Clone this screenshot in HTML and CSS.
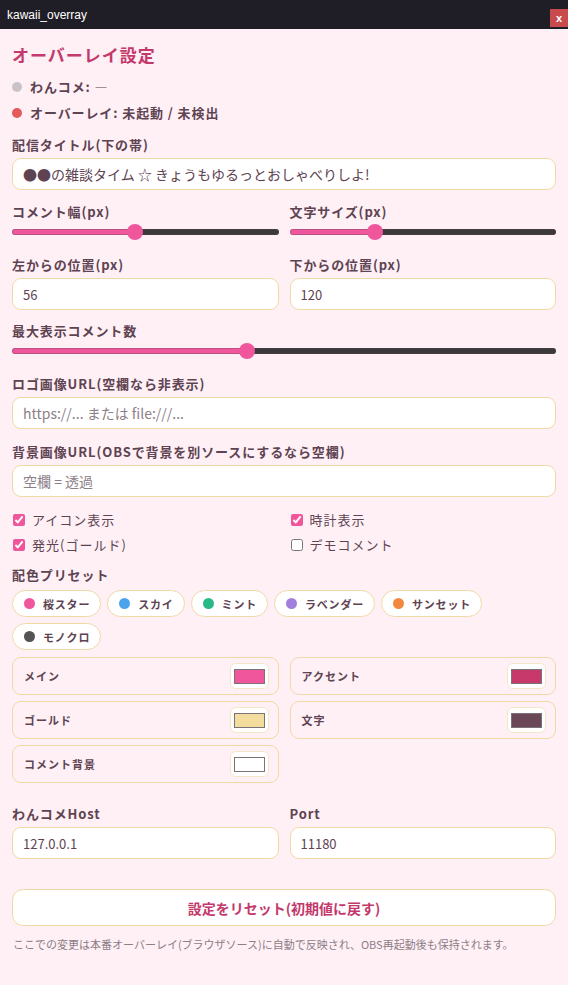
FILE: index.html
```html
<!DOCTYPE html>
<html lang="ja">
<head>
<meta charset="utf-8">
<title>kawaii_overray</title>
<link rel="stylesheet" href="styles.css">
</head>
<body>
<div class="titlebar">
  <span class="app-name">kawaii_overray</span>
  <span class="close">x</span>
</div>
<main class="panel">
  <h1 class="heading">オーバーレイ設定</h1>
  <div class="statuses">
    <div class="status"><span class="dot dot-gray"></span>わんコメ: —</div>
    <div class="status"><span class="dot dot-red"></span>オーバーレイ: 未起動 / 未検出</div>
  </div>

  <div class="field mt13">
    <label class="label">配信タイトル(下の帯)</label>
    <input class="text-input" type="text" value="●●の雑談タイム ☆ きょうもゆるっとおしゃべりしよ!">
  </div>

  <div class="grid2 mt13">
    <div class="field">
      <label class="label slim">コメント幅(px)</label>
      <input class="range" type="range" min="0" max="100" value="46" style="--p:46%">
    </div>
    <div class="field">
      <label class="label slim">文字サイズ(px)</label>
      <input class="range" type="range" min="0" max="100" value="31" style="--p:31%">
    </div>
  </div>

  <div class="grid2 mt16">
    <div class="field">
      <label class="label">左からの位置(px)</label>
      <input class="text-input num" type="text" value="56">
    </div>
    <div class="field">
      <label class="label">下からの位置(px)</label>
      <input class="text-input num" type="text" value="120">
    </div>
  </div>

  <div class="field mt12">
    <label class="label slim">最大表示コメント数</label>
    <input class="range" type="range" min="0" max="100" value="43" style="--p:43%">
  </div>

  <div class="field mt16">
    <label class="label">ロゴ画像URL(空欄なら非表示)</label>
    <input class="text-input" type="text" placeholder="https://... または file:///...">
  </div>

  <div class="field mt14">
    <label class="label">背景画像URL(OBSで背景を別ソースにするなら空欄)</label>
    <input class="text-input" type="text" placeholder="空欄 = 透過">
  </div>

  <div class="checks mt13">
    <label class="check"><input type="checkbox" checked>アイコン表示</label>
    <label class="check"><input type="checkbox" checked>時計表示</label>
    <label class="check"><input type="checkbox" checked>発光(ゴールド)</label>
    <label class="check"><input type="checkbox">デモコメント</label>
  </div>

  <div class="label mt11 presets-label">配色プリセット</div>
  <div class="chips">
    <button class="chip"><span class="chip-dot c-sakura"></span>桜スター</button>
    <button class="chip"><span class="chip-dot c-sky"></span>スカイ</button>
    <button class="chip"><span class="chip-dot c-mint"></span>ミント</button>
    <button class="chip"><span class="chip-dot c-lavender"></span>ラベンダー</button>
    <button class="chip"><span class="chip-dot c-sunset"></span>サンセット</button>
    <button class="chip"><span class="chip-dot c-mono"></span>モノクロ</button>
  </div>

  <div class="cards">
    <div class="card"><span class="card-label">メイン</span><span class="swatch"><span class="swatch-fill s-main"></span></span></div>
    <div class="card"><span class="card-label">アクセント</span><span class="swatch"><span class="swatch-fill s-accent"></span></span></div>
    <div class="card"><span class="card-label">ゴールド</span><span class="swatch"><span class="swatch-fill s-gold"></span></span></div>
    <div class="card"><span class="card-label">文字</span><span class="swatch"><span class="swatch-fill s-text"></span></span></div>
    <div class="card"><span class="card-label">コメント背景</span><span class="swatch"><span class="swatch-fill s-bg"></span></span></div>
  </div>

  <div class="grid2 mt22">
    <div class="field">
      <label class="label">わんコメHost</label>
      <input class="text-input num" type="text" value="127.0.0.1">
    </div>
    <div class="field">
      <label class="label">Port</label>
      <input class="text-input num" type="text" value="11180">
    </div>
  </div>

  <button class="reset">設定をリセット(初期値に戻す)</button>
  <p class="note">ここでの変更は本番オーバーレイ(ブラウザソース)に自動で反映され、OBS再起動後も保持されます。</p>
</main>
</body>
</html>
```

FILE: styles.css
```css
* { box-sizing: border-box; }

html, body {
  margin: 0;
  padding: 0;
  background: #fff0f5;
  font-family: "Noto Sans CJK JP", "Noto Sans", sans-serif;
  color: #5e4352;
}

.titlebar {
  height: 29px;
  background: #1f1d25;
  display: flex;
  align-items: center;
  justify-content: space-between;
  padding-left: 7px;
}

.app-name {
  color: #ffffff;
  font-family: "Liberation Sans", sans-serif;
  font-size: 12px;
}

.close {
  width: 18px;
  height: 18px;
  background: #c94a4d;
  color: #ffffff;
  font-family: "Liberation Sans", sans-serif;
  font-size: 11px;
  font-weight: bold;
  display: flex;
  align-items: center;
  justify-content: center;
  align-self: flex-end;
  margin-bottom: 2px;
}

.panel {
  padding: 14px 12px 20px;
  display: flex;
  flex-direction: column;
}

.heading {
  margin: 0;
  font-size: 17px;
  line-height: 24px;
  font-weight: 700;
  letter-spacing: 1px;
  color: #c4396c;
}

.statuses {
  margin-top: 10px;
  display: flex;
  flex-direction: column;
  gap: 6px;
}

.status {
  display: flex;
  align-items: center;
  gap: 8px;
  font-size: 13px;
  font-weight: 700;
  line-height: 20px;
  letter-spacing: 0.9px;
}

.dot {
  width: 10px;
  height: 10px;
  border-radius: 50%;
  display: inline-block;
}
.dot-gray { background: #c9c3c7; }
.dot-red { background: #e35b5b; }

.mt11 { margin-top: 11px; }
.mt12 { margin-top: 12px; }
.mt13 { margin-top: 13px; }
.mt14 { margin-top: 14px; }
.mt16 { margin-top: 16px; }
.mt22 { margin-top: 22px; }

.field {
  display: flex;
  flex-direction: column;
}

.label {
  display: block;
  font-size: 13px;
  font-weight: 700;
  line-height: 18px;
  letter-spacing: 0.9px;
  margin-bottom: 4px;
}
.label.slim { margin-bottom: 3px; }

.grid2 {
  display: grid;
  grid-template-columns: 1fr 1fr;
  column-gap: 11px;
}

.text-input {
  height: 32px;
  width: 100%;
  border: 1px solid #f1d9a6;
  border-radius: 9px;
  background: #ffffff;
  padding: 0 10px;
  font-family: "Noto Sans CJK JP", sans-serif;
  font-size: 14px;
  color: #5e4352;
  outline: none;
}
.text-input.num { font-size: 13px; }
.text-input::placeholder { color: #8c8088; }

.range {
  -webkit-appearance: none;
  appearance: none;
  width: 100%;
  height: 16px;
  margin: 0;
  background: transparent;
}
.range::-webkit-slider-runnable-track {
  height: 6px;
  border-radius: 3px;
  background: linear-gradient(to right, #f0569c var(--p), #3b393b var(--p));
  box-shadow: inset 0 0 0 1px rgba(90, 70, 80, 0.35);
}
.range::-webkit-slider-thumb {
  -webkit-appearance: none;
  width: 16px;
  height: 16px;
  border-radius: 50%;
  background: #f0569c;
  margin-top: -5px;
  border: none;
}

.checks {
  display: grid;
  grid-template-columns: 1fr 1fr;
  column-gap: 11px;
  row-gap: 5px;
}

.check {
  display: flex;
  align-items: center;
  gap: 7px;
  font-size: 13px;
  line-height: 20px;
  letter-spacing: 1px;
  color: #5e4352;
}
.check input {
  margin: 0 0 0 1px;
  width: 12px;
  height: 12px;
  accent-color: #f0569c;
}

.presets-label { margin-bottom: 6px; }

.chips {
  display: flex;
  flex-wrap: wrap;
  gap: 6px;
  width: 490px;
}

.chip {
  height: 27px;
  display: flex;
  align-items: center;
  gap: 8px;
  padding: 0 10px 0 11px;
  background: #ffffff;
  border: 1px solid #f1d9a6;
  border-radius: 14px;
  font-family: "Noto Sans CJK JP", sans-serif;
  font-size: 11px;
  font-weight: 700;
  letter-spacing: 0.8px;
  color: #5e4352;
}

.chip-dot {
  width: 11px;
  height: 11px;
  border-radius: 50%;
  display: inline-block;
}
.c-sakura { background: #f0569c; }
.c-sky { background: #4ba3ec; }
.c-mint { background: #2bb889; }
.c-lavender { background: #a17fdc; }
.c-sunset { background: #f0893f; }
.c-mono { background: #545454; }

.cards {
  margin-top: 7px;
  display: grid;
  grid-template-columns: 1fr 1fr;
  column-gap: 11px;
  row-gap: 6px;
}

.card {
  height: 38px;
  display: flex;
  align-items: center;
  justify-content: space-between;
  padding: 0 9px 0 11px;
  border: 1px solid #f1d9a6;
  border-radius: 9px;
}

.card-label {
  font-size: 11px;
  font-weight: 700;
  letter-spacing: 1px;
}

.swatch {
  width: 39px;
  height: 26px;
  background: #ffffff;
  border: 1px solid #f5e6c6;
  border-radius: 6px;
  display: flex;
  align-items: center;
  justify-content: center;
}

.swatch-fill {
  width: 31px;
  height: 15px;
  border: 1px solid #7a7276;
}
.s-main { background: #f0569c; }
.s-accent { background: #c7386b; }
.s-gold { background: #f2dd9e; }
.s-text { background: #6b4858; }
.s-bg { background: #ffffff; }

.reset {
  margin-top: 30px;
  height: 37px;
  width: 100%;
  background: #ffffff;
  border: 1px solid #f1d9a6;
  border-radius: 11px;
  font-family: "Noto Sans CJK JP", sans-serif;
  font-size: 14px;
  font-weight: 700;
  color: #c4396c;
}

.note {
  margin: 10px 0 0 1px;
  font-size: 11px;
  line-height: 16px;
  color: #8d7d87;
}
```
